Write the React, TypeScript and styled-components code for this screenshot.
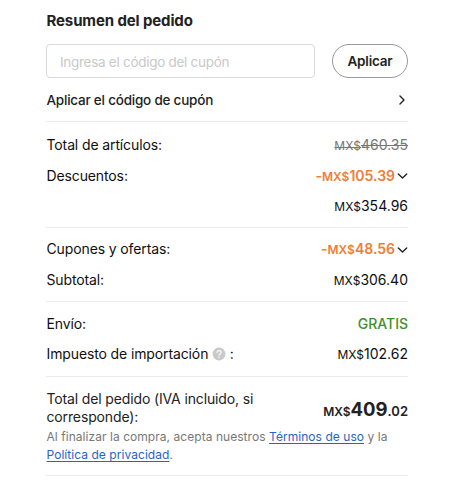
import React from "react";
import styled, { createGlobalStyle } from "styled-components";

const GlobalStyle = createGlobalStyle`
  * { box-sizing: border-box; }
  body { margin: 0; background: #fff; font-family: Inter, "Liberation Sans", sans-serif; }
`;

const Summary = styled.main`
  width: 450px;
  height: 484px;
  padding: 10px 42px 0 46px;
  color: #0f0f0f;
  overflow: hidden;
`;

const Title = styled.h1`
  margin: 0;
  height: 22px;
  padding-left: 0.5px;
  font-size: 15px;
  font-weight: 650;
  line-height: 22px;
  letter-spacing: -0.12px;
  color: #222;
`;

const CouponForm = styled.div`
  display: flex;
  justify-content: space-between;
  height: 34px;
  margin-top: 12px;
`;

const CouponInput = styled.input`
  width: 269px;
  height: 34px;
  padding: 2px 12px 0 13px;
  border: 1px solid #d9d9d9;
  border-radius: 4px;
  outline: none;
  background: #fff;
  font-family: inherit;
  font-size: 13.5px;
  letter-spacing: -0.28px;
  &::placeholder { color: #c9c9c9; opacity: 1; }
`;

const ApplyButton = styled.button`
  width: 76px;
  height: 34px;
  padding: 0;
  border: 1px solid #999;
  border-radius: 17px;
  background: #fff;
  color: #222;
  font-family: inherit;
  font-size: 13.5px;
  font-weight: 600;
  letter-spacing: -0.2px;
`;

const CouponLink = styled.div`
  display: flex;
  align-items: center;
  justify-content: space-between;
  height: 43px;
  padding: 0 2px 0 0.5px;
  color: #222;
  font-size: 13.5px;
  font-weight: 500;
  letter-spacing: -0.22px;
`;

const Section = styled.section<{ $height: number; $top: number }>`
  height: ${(p) => p.$height}px;
  padding-top: ${(p) => p.$top}px;
  border-top: 1px solid #ececec;
`;

const Row = styled.div`
  display: flex;
  align-items: center;
  justify-content: space-between;
  height: 30.4px;
  font-size: 14px;
  line-height: 20px;
`;

const Label = styled.span`
  display: inline-flex;
  align-items: center;
  padding-left: 0.5px;
  letter-spacing: -0.12px;
`;

const tones = {
  normal: { color: "#0f0f0f", weight: 400 },
  struck: { color: "#777", weight: 400 },
  discount: { color: "#ef7d36", weight: 600 },
  free: { color: "#3f9127", weight: 500 },
};

const Amount = styled.span<{ $tone?: keyof typeof tones }>`
  display: inline-flex;
  align-items: center;
  margin-left: auto;
  padding-top: 1px;
  color: ${(p) => tones[p.$tone ?? "normal"].color};
  font-weight: ${(p) => tones[p.$tone ?? "normal"].weight};
`;

const Price = styled.span<{ $struck?: boolean }>`
  text-decoration: ${(p) => (p.$struck ? "line-through" : "none")};
`;

const Currency = styled.span`
  font-size: 12px;
`;

const Chevron = styled.svg`
  display: block;
  fill: none;
  stroke: #222;
  stroke-width: 1.4;
  stroke-linecap: round;
  stroke-linejoin: round;
`;

const HelpIcon = styled.svg`
  margin: 0 4px 0 3.5px;
`;

const TotalSection = styled.section`
  height: 100px;
  padding-top: 13px;
  border-top: 1px solid #ececec;
  border-bottom: 1px solid #ececec;
`;

const TotalRow = styled.div`
  display: flex;
  justify-content: space-between;
  height: 38px;
`;

const TotalLabel = styled.div`
  padding-left: 0.5px;
  color: #222;
  font-size: 14px;
  line-height: 18px;
  letter-spacing: -0.14px;
`;

const TotalAmount = styled.div`
  padding-top: 5px;
  color: #222;
  font-size: 13px;
  font-weight: 600;
  line-height: 28px;
  white-space: nowrap;
`;

const TotalCurrency = styled.span`
  font-size: 12px;
`;

const TotalWhole = styled.span`
  font-size: 18.5px;
  font-weight: 650;
`;

const Legal = styled.p`
  margin: 0;
  padding-left: 0.5px;
  color: #777;
  font-size: 12px;
  line-height: 17.5px;
  letter-spacing: 0.05px;
  white-space: nowrap;
`;

const LegalLink = styled.a`
  color: #2864c4;
  text-decoration: underline;
  text-decoration-skip-ink: none;
  text-underline-offset: 1.5px;
`;

const DownChevron = () => (
  <Chevron width="13" height="10" viewBox="0 0 13 10">
    <path d="M3.3 3l4.2 4 4.2-4" />
  </Chevron>
);

export default function App() {
  return (
    <>
      <GlobalStyle />
      <Summary>
        <Title>Resumen del pedido</Title>
        <CouponForm>
          <CouponInput placeholder="Ingresa el código del cupón" />
          <ApplyButton>Aplicar</ApplyButton>
        </CouponForm>
        <CouponLink>
          <span>Aplicar el código de cupón</span>
          <Chevron width="8" height="12" viewBox="0 0 8 12">
            <path d="M2 2l4 4-4 4" />
          </Chevron>
        </CouponLink>

        <Section $height={106} $top={8}>
          <Row>
            <Label>Total de artículos:</Label>
            <Amount $tone="struck"><Price $struck><Currency>MX$</Currency>460.35</Price></Amount>
          </Row>
          <Row>
            <Label>Descuentos:</Label>
            <Amount $tone="discount"><Price>-<Currency>MX$</Currency>105.39</Price><DownChevron /></Amount>
          </Row>
          <Row>
            <Amount><Price><Currency>MX$</Currency>354.96</Price></Amount>
          </Row>
        </Section>

        <Section $height={74} $top={6}>
          <Row>
            <Label>Cupones y ofertas:</Label>
            <Amount $tone="discount"><Price>-<Currency>MX$</Currency>48.56</Price><DownChevron /></Amount>
          </Row>
          <Row>
            <Label>Subtotal:</Label>
            <Amount><Price><Currency>MX$</Currency>306.40</Price></Amount>
          </Row>
        </Section>

        <Section $height={75} $top={6.4}>
          <Row>
            <Label>Envío:</Label>
            <Amount $tone="free">GRATIS</Amount>
          </Row>
          <Row>
            <Label>
              Impuesto de importación
              <HelpIcon width="14" height="14" viewBox="0 0 14 14">
                <circle cx="7" cy="7" r="6.4" fill="#c9c9c9" />
                <path d="M5 5.6c0-2.7 4.1-2.5 4.1-.1 0 1.4-2.1 1.5-2.1 2.8" fill="none" stroke="#fff" strokeWidth="1.1" strokeLinecap="round" />
                <circle cx="7" cy="10.2" r=".75" fill="#fff" />
              </HelpIcon>
              :
            </Label>
            <Amount><Price><Currency>MX$</Currency>102.62</Price></Amount>
          </Row>
        </Section>

        <TotalSection>
          <TotalRow>
            <TotalLabel>Total del pedido (IVA incluido, si<br />corresponde):</TotalLabel>
            <TotalAmount>
              <TotalCurrency>MX$</TotalCurrency><TotalWhole>409</TotalWhole>.02
            </TotalAmount>
          </TotalRow>
          <Legal>
            Al finalizar la compra, acepta nuestros <LegalLink>Términos de uso</LegalLink> y la<br />
            <LegalLink>Política de privacidad</LegalLink>.
          </Legal>
        </TotalSection>
      </Summary>
    </>
  );
}
